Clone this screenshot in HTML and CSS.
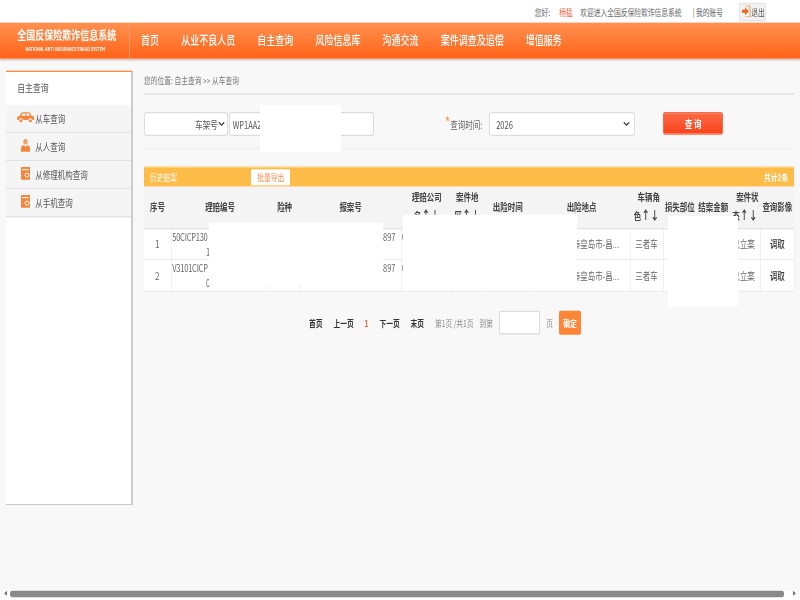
FILE: index.html
```html
<!DOCTYPE html>
<html lang="zh-CN">
<head>
  <meta charset="UTF-8">
  <title>全国反保险欺诈信息系统</title>
  <link rel="stylesheet" href="styles.css">
</head>
<body>
<div class="page">
  <div class="topbar">
    <span>您好:</span>
    <span class="user">杨猛</span>
    <span class="welcome">欢迎进入全国反保险欺诈信息系统</span>
    <span class="account">| 我的账号</span>
    <a class="logout">
      <svg width="13" height="12" viewBox="0 0 10 12" preserveAspectRatio="none"><path d="M4 .5h5.500v11H4" fill="none" stroke="#f5924f"/><path d="M0 4.500h3.500V2L8 6l-4.500 4V7.500H0z" fill="#f0641e"/></svg>
      退出
    </a>
  </div>
  <div class="nav">
    <div class="logo">
      <div class="logo-cn">全国反保险欺诈信息系统</div>
      <div class="logo-en">NATIONAL ANTI INSURANCE FRAUD SYSTEM</div>
    </div>
    <ul class="nav-list">
      <li>首页</li>
      <li>从业不良人员</li>
      <li>自主查询</li>
      <li>风险信息库</li>
      <li>沟通交流</li>
      <li>案件调查及追偿</li>
      <li>增值服务</li>
    </ul>
  </div>
  <div class="main">
    <div class="sidebar">
      <div class="side-title">自主查询</div>
      <div class="side-item">
        <svg class="side-car" width="23" height="11" viewBox="0 0 17 13" preserveAspectRatio="none"><path d="M4 1.500C4.500.6 5.300.2 6 .2h5c.8 0 1.500.4 2 1.300l1.300 3c1.500.3 2.500 1.200 2.500 2.500v2.500h-1.600a2 2 0 0 0-4 0H5.800a2 2 0 0 0-4 0H.2V7c0-1.300 1-2.200 2.500-2.500z" fill="#f5843c"/><path d="M5.500 1.800h2.700v2.700H4.400zM9.300 1.800h2.300l1 2.700H9.300z" fill="#fff"/><circle cx="3.800" cy="10.500" r="1.500" fill="#f5843c"/><circle cx="13.200" cy="10.500" r="1.500" fill="#f5843c"/></svg>
        从车查询
      </div>
      <div class="side-item">
        <svg class="side-icon" width="12" height="13" viewBox="0 0 9 13" preserveAspectRatio="none"><ellipse cx="4.500" cy="3" rx="2.200" ry="2.900" fill="#f5a26a"/><path d="M0 13V9.500C0 7.800 1.500 6.800 3 6.500l1.500 1.500L6 6.500c1.500.3 3 1.300 3 3V13z" fill="#f5843c"/></svg>
        从人查询
      </div>
      <div class="side-item">
        <svg class="side-icon" width="12" height="13" viewBox="0 0 9 13" preserveAspectRatio="none"><rect width="9" height="13" rx="1" fill="#f5843c"/><rect x="1" y="2.500" width="7" height="1" fill="#fff"/><circle cx="6" cy="8.500" r="2" fill="none" stroke="#fff"/></svg>
        从修理机构查询
      </div>
      <div class="side-item">
        <svg class="side-icon" width="12" height="13" viewBox="0 0 9 13" preserveAspectRatio="none"><rect width="9" height="13" rx="1" fill="#f5843c"/><rect x="1" y="2.500" width="7" height="1" fill="#fff"/><circle cx="6" cy="8.500" r="2" fill="none" stroke="#fff"/></svg>
        从手机查询
      </div>
    </div>
    <div class="content">
      <div class="crumb">您的位置: 自主查询 &gt;&gt; 从车查询</div>
      <div class="search">
        <select class="sel-type"><option>车架号</option></select>
        <input class="vin" type="text" value="WP1AA2">
        <label class="time-label"><span class="star">*</span>查询时间:</label>
        <select class="sel-year"><option>2026</option></select>
        <button class="btn-search" type="button">查 询</button>
      </div>
      <div class="result-bar">
        <span>历史赔案</span>
        <a class="export">批量导出</a>
        <span class="count">共计2条</span>
      </div>
      <table class="result">
        <colgroup>
          <col class="c36"><col class="c131"><col class="c41"><col class="c135"><col class="c68"><col class="c40"><col class="c68"><col class="c129"><col class="c44"><col class="c45"><col class="c44"><col class="c41"><col class="c45">
        </colgroup>
        <thead>
          <tr>
            <th>序号</th>
            <th>理赔编号</th>
            <th>险种</th>
            <th>报案号</th>
            <th>理赔公司<br>名<i>↑↓</i></th>
            <th>案件地<br>区<i>↑↓</i></th>
            <th>出险时间</th>
            <th>出险地点</th>
            <th><span class="th-top">车辆角</span><br>色<i>↑↓</i></th>
            <th>损失部位</th>
            <th>结案金额</th>
            <th><span class="th-top">案件状</span><br>态<i>↑↓</i></th>
            <th>查询影像</th>
          </tr>
        </thead>
        <tbody>
          <tr>
            <td class="num">1</td>
            <td class="claim">50CICP130<br><span class="tail">1</span></td>
            <td></td>
            <td class="report">897</td>
            <td class="company">中</td>
            <td></td>
            <td></td>
            <td class="place">秦皇岛市-昌...</td>
            <td>三者车</td>
            <td></td>
            <td></td>
            <td class="state">已立案</td>
            <td class="fetch">调取</td>
          </tr>
          <tr>
            <td class="num">2</td>
            <td class="claim">V3101CICP<br><span class="tail">0</span></td>
            <td></td>
            <td class="report">897</td>
            <td class="company">中</td>
            <td></td>
            <td></td>
            <td class="place">秦皇岛市-昌...</td>
            <td>三者车</td>
            <td></td>
            <td></td>
            <td class="state">已立案</td>
            <td class="fetch">调取</td>
          </tr>
        </tbody>
      </table>
      <div class="pager">
        <a>首页</a>
        <a>上一页</a>
        <a class="current">1</a>
        <a>下一页</a>
        <a>末页</a>
        <span>第1页 /共1页</span>
        <span>到第</span>
        <input class="page-input" type="text">
        <span>页</span>
        <button class="page-ok" type="button">确定</button>
      </div>
    </div>
  </div>
  <div class="mask mask-vin"></div>
  <div class="mask mask-claim"></div>
  <div class="mask mask-company"></div>
  <div class="mask mask-money"></div>
  <div class="hscroll">
    <span class="arrow-left"></span>
    <span class="thumb"></span>
    <span class="arrow-right"></span>
  </div>
</div>
</body>
</html>
```
FILE: styles.css
```css
* { box-sizing: border-box; }
html, body {
  height: 100%;
  overflow: hidden;
}
body {
  margin: 0;
  background: #f8f8f8;
  color: #666;
  font-family: "Noto Sans CJK SC", "Liberation Sans", sans-serif;
  font-size: 9px;
}
/* the capture is squeezed sideways: zoom takes it down to 800 wide, scaleY puts the height back */
.page {
  position: relative;
  width: 1066px;
  height: 600px;
  zoom: 0.75;
  transform: scaleY(1.3333);
  transform-origin: 0 0;
}
.topbar {
  display: flex;
  align-items: center;
  height: 23px;
  padding-left: 713px;
  background: #fff;
  white-space: nowrap;
}
.user {
  margin-left: 12px;
  color: #f0603c;
}
.welcome { margin-left: 10px; }
.account { margin-left: 15px; }
.logout {
  display: flex;
  align-items: center;
  gap: 1px;
  width: 36px;
  height: 19px;
  margin-left: 21px;
  padding-left: 3px;
  background: #f2f2f2;
  border: 1px solid #e4e4e4;
  border-radius: 2px;
  color: #555;
}
.nav {
  display: flex;
  height: 36px;
  background: linear-gradient(#ff9150, #ff6319);
  box-shadow: 0 1px 2px rgba(120,60,20,0.35);
  color: #fff;
}
.logo {
  width: 173px;
  padding: 5px 0 0 23px;
  border-right: 1px solid #f39a63;
}
.logo-cn {
  font-weight: 700;
  font-size: 12px;
  line-height: 15px;
  white-space: nowrap;
}
.logo-en {
  margin: 3px 0 0 11px;
  font-size: 5px;
  font-weight: 700;
  line-height: 6px;
  white-space: nowrap;
}
.nav-list {
  display: flex;
  gap: 29.5px;
  margin: 0;
  padding: 0 0 0 15px;
  list-style: none;
  font-size: 12px;
  font-weight: 500;
  line-height: 36px;
}
.main {
  display: flex;
  gap: 15px;
  padding: 11px 0 0 8px;
}
.sidebar {
  width: 169px;
  height: 435px;
  background: #fff;
  border-top: 2px solid #ff8a3d;
  border-right: 3px solid #ccc;
  border-bottom: 2px solid #ccc;
}
.side-title {
  height: 34px;
  padding-left: 15px;
  color: #555;
  font-size: 10.5px;
  line-height: 32px;
}
.side-item {
  display: flex;
  align-items: center;
  height: 28px;
  padding: 0 0 2px 20px;
  background: #f5f5f5;
  border-bottom: 1px solid #e2e2e2;
  color: #555;
  font-size: 10px;
}
.side-car { margin: 0 2px 0 -6px; }
.side-icon { margin-right: 7px; }
.content { width: 867px; }
.crumb {
  height: 24px;
  border-bottom: 1px solid #ddd;
  color: #777;
  line-height: 21px;
}
.search {
  display: flex;
  align-items: flex-start;
  height: 55px;
  padding-top: 18px;
  border-bottom: 1px solid #efefef;
}
.search select, .search input {
  height: 24px;
  background-color: #fff;
  border: 1px solid #ddd;
  border-radius: 3px;
  color: #555;
  font-family: inherit;
  font-size: 10px;
}
.search select {
  appearance: none;
  background-image: url("data:image/svg+xml,%3Csvg xmlns='http://www.w3.org/2000/svg' width='9' height='5'%3E%3Cpath d='M1 1l3.500 2.500L8 1' fill='none' stroke='%23444' stroke-width='1.500'/%3E%3C/svg%3E");
  background-repeat: no-repeat;
}
.sel-type {
  width: 112px;
  padding-left: 67px;
  background-position: right 3px center;
}
.vin {
  width: 193px;
  margin-left: 1px;
  padding-left: 4px;
}
.time-label {
  margin-left: 95px;
  font-size: 10px;
  line-height: 26px;
}
.star {
  color: #f59a5f;
  font-size: 16px;
  line-height: 0;
}
.sel-year {
  width: 195px;
  margin-left: 9px;
  padding-left: 8px;
  background-position: right 6px center;
}
.btn-search {
  width: 80px;
  height: 23px;
  margin-left: 37px;
  background: linear-gradient(#fb6a46, #f9431c);
  border: 1px solid #fb6a46;
  border-radius: 3px;
  color: #fff;
  font-family: inherit;
  font-size: 10px;
  font-weight: 700;
}
.result-bar {
  display: flex;
  align-items: center;
  height: 21px;
  margin-top: 17px;
  padding: 0 8px;
  background: #fdbb48;
  border-top: 1px solid #fdd27c;
  color: #fff;
}
.export {
  width: 52px;
  height: 17px;
  margin-left: 99px;
  background: #fff;
  color: #f98d4e;
  line-height: 18px;
  text-align: center;
}
.count {
  margin-left: auto;
  font-weight: 700;
}
.result {
  width: 867px;
  border-collapse: collapse;
  table-layout: fixed;
}
.c36 { width: 36px; }
.c131 { width: 131px; }
.c41 { width: 41px; }
.c135 { width: 135px; }
.c68 { width: 68px; }
.c40 { width: 40px; }
.c129 { width: 129px; }
.c44 { width: 44px; }
.c45 { width: 45px; }
.result th {
  height: 41px;
  padding: 0;
  background: #f4f4f4;
  border-bottom: 2px solid #e4e4e4;
  color: #444;
  font-size: 10px;
  font-weight: 700;
  line-height: 19px;
  white-space: nowrap;
}
.result th i {
  font-style: normal;
  font-size: 12px;
  line-height: 1;
}
.th-top { margin-left: 6px; }
.result td {
  height: 31px;
  padding: 0;
  background: #fff;
  border-right: 1px solid #f0f0f0;
  border-bottom: 1px solid #eee;
  color: #666;
  font-size: 10px;
  line-height: 15px;
  text-align: center;
  white-space: nowrap;
  overflow: hidden;
}
.result td.num { font-size: 11px; }
.result td.claim {
  padding-left: 1px;
  letter-spacing: -0.3px;
  text-align: left;
  vertical-align: top;
}
.tail { margin-left: 45px; }
.result td.report {
  padding-right: 7px;
  text-align: right;
  vertical-align: top;
}
.result td.company {
  text-align: left;
  vertical-align: top;
}
.result td.place {
  padding-right: 14px;
  text-align: right;
}
.result td.state {
  padding-right: 7px;
  text-align: right;
}
.result td.fetch {
  color: #333;
  font-weight: 500;
}
.pager {
  display: flex;
  align-items: center;
  height: 24px;
  margin-top: 19px;
  padding-left: 220px;
  color: #888;
}
.pager a {
  margin-right: 14.5px;
  color: #333;
  font-weight: 700;
}
.pager a.current { color: #f0603c; }
.pager span { margin-right: 8px; }
.page-input {
  width: 55px;
  height: 24px;
  margin-right: 8px;
  background: #fff;
  border: 1px solid #ddd;
  border-radius: 2px;
}
.page-ok {
  width: 29px;
  height: 24px;
  padding: 0;
  background: #ff8537;
  border: 0;
  border-radius: 2px;
  color: #fff;
  font-family: inherit;
  font-size: 9px;
  font-weight: 700;
}
.mask {
  position: absolute;
  background: #fff;
}
.mask-vin { left: 347px; top: 105px; width: 107px; height: 47px; }
.mask-claim { left: 279px; top: 223px; width: 232px; height: 62px; }
.mask-company { left: 537px; top: 215px; width: 232px; height: 73px; }
.mask-money { left: 891px; top: 216px; width: 93px; height: 90px; }
.hscroll {
  position: absolute;
  left: 0;
  bottom: 0;
  display: flex;
  align-items: flex-start;
  width: 100%;
  height: 10px;
  padding: 0 5px;
  background: #fff;
}
.thumb {
  flex: 1;
  height: 7px;
  margin: 0 12px 0 4px;
  background: #8a8a8a;
  border-radius: 3px;
}
.arrow-left, .arrow-right {
  width: 0;
  height: 0;
  margin-top: 1px;
  border-top: 3px solid transparent;
  border-bottom: 3px solid transparent;
}
.arrow-left { border-right: 4px solid #777; }
.arrow-right { border-left: 4px solid #777; }
```
